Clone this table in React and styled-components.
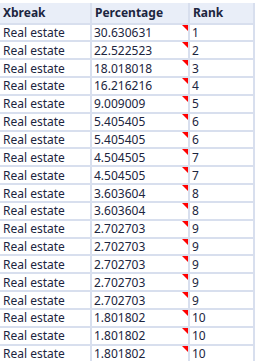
import React from 'react';
import styled, { createGlobalStyle } from 'styled-components';

const rows = [
  ['Real estate', '30.630631', '1'],
  ['Real estate', '22.522523', '2'],
  ['Real estate', '18.018018', '3'],
  ['Real estate', '16.216216', '4'],
  ['Real estate', '9.009009', '5'],
  ['Real estate', '5.405405', '6'],
  ['Real estate', '5.405405', '6'],
  ['Real estate', '4.504505', '7'],
  ['Real estate', '4.504505', '7'],
  ['Real estate', '3.603604', '8'],
  ['Real estate', '3.603604', '8'],
  ['Real estate', '2.702703', '9'],
  ['Real estate', '2.702703', '9'],
  ['Real estate', '2.702703', '9'],
  ['Real estate', '2.702703', '9'],
  ['Real estate', '2.702703', '9'],
  ['Real estate', '1.801802', '10'],
  ['Real estate', '1.801802', '10'],
  ['Real estate', '1.801802', '10'],
];

const GlobalStyle = createGlobalStyle`
  html, body {
    margin: 0;
    padding: 0;
    background: #ffffff;
  }
  body {
    font-family: "Noto Sans", "Open Sans", sans-serif;
  }
`;

const Grid = styled.div`
  display: inline-grid;
  grid-template-columns: 90px 96px 63px;
  grid-template-rows: 20px;
  grid-auto-rows: 15.85px;
  gap: 2px;
  padding: 0 2px 2px 0;
  background: #d8dfee;
`;

const HeadCell = styled.div`
  background: #e9eef8;
  color: #1c2540;
  font-size: 12px;
  font-weight: 700;
  display: flex;
  align-items: center;
  padding-left: 3px;
`;

const Cell = styled.div`
  position: relative;
  background: #ffffff;
  color: #1c2540;
  font-size: 12px;
  line-height: 14px;
  display: flex;
  align-items: center;
  padding-left: ${p => (p.$first ? 3 : 2)}px;
  padding-top: 1px;
  white-space: nowrap;
`;

// red comment marker in the top-right corner
const Marker = styled.span`
  position: absolute;
  top: 0;
  right: 0;
  width: 0;
  height: 0;
  border-top: 6px solid #ff0000;
  border-left: 6px solid transparent;
`;

export default function App() {
  return (
    <>
      <GlobalStyle />
      <Grid>
        <HeadCell>Xbreak</HeadCell>
        <HeadCell>Percentage</HeadCell>
        <HeadCell>Rank</HeadCell>
        {rows.map((r, i) => (
          <React.Fragment key={i}>
            <Cell $first>{r[0]}</Cell>
            <Cell>
              {r[1]}
              <Marker />
            </Cell>
            <Cell>{r[2]}</Cell>
          </React.Fragment>
        ))}
      </Grid>
    </>
  );
}
